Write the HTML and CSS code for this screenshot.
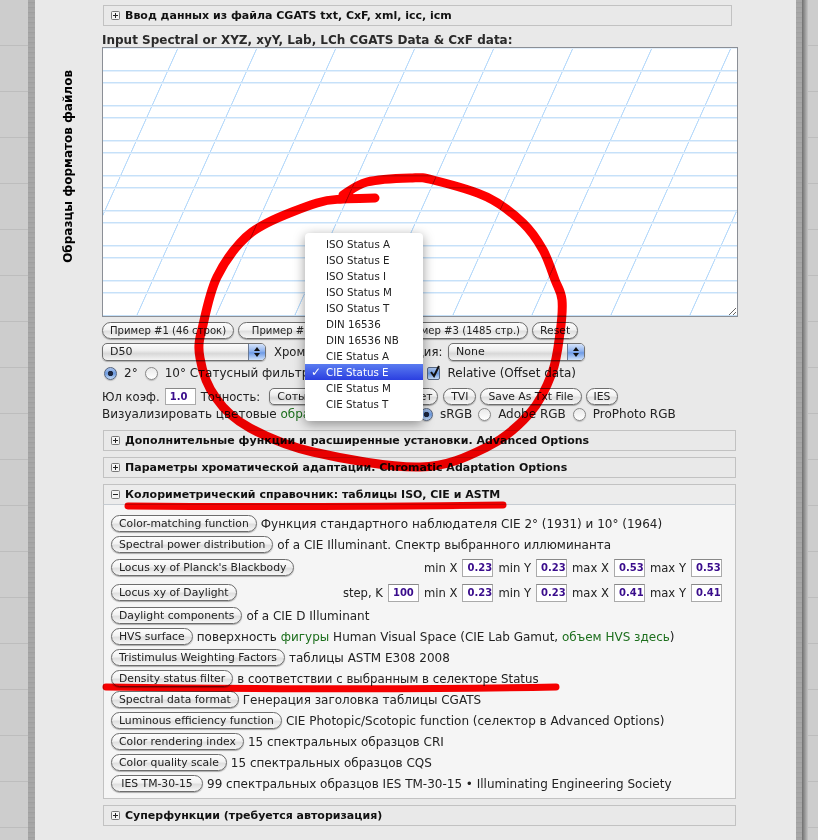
FILE: index.html
```html
<!DOCTYPE html>
<html lang="ru">
<head>
<meta charset="utf-8">
<title>Колориметрический справочник</title>
<link rel="stylesheet" href="styles.css">
</head>
<body>
<div class="page">
  <div class="gutter"></div>
  <div class="band"></div>
  <main class="panel">
    <aside class="side"><span class="side-title">Образцы форматов файлов</span></aside>
    <div class="content">
      <div class="head head-first"><svg class="tog" viewBox="0 0 9 9"><rect x=".5" y=".5" width="8" height="8" rx="1"/><path d="M2 4.5h5M4.5 2v5"/></svg>Ввод данных из файла CGATS txt, CxF, xml, icc, icm</div>
      <div class="input-label">Input Spectral or XYZ, xyY, Lab, LCh CGATS Data &amp; CxF data:</div>
      <textarea class="data" spellcheck="false"></textarea>

      <div class="row row-samples">
        <button class="pill pill-ru">Пример #1 (46 строк)</button>
        <button class="pill pill-ru pill-two">Пример #2 (217 строк)</button>
        <button class="pill pill-ru">Пример #3 (1485 стр.)</button>
        <button class="pill">Reset</button>
      </div>
      <div class="row row-selects">
        <div class="sel sel-illum">D50<span class="arrows"><svg viewBox="0 0 8 12"><path d="M4 1l3 4H1zM4 11L1 7h6z"/></svg></span></div>
        <span class="lbl-chrom">Хроматическая адаптация:</span>
        <div class="sel sel-chrom">None<span class="arrows"><svg viewBox="0 0 8 12"><path d="M4 1l3 4H1zM4 11L1 7h6z"/></svg></span></div>
      </div>
      <div class="row row-observer">
        <span class="radio on"></span><span class="t-deg2">2°</span>
        <span class="radio"></span><span class="t-status">10° Статусный фильтр</span>
        <div class="sel sel-status">CIE Status E<span class="arrows"><svg viewBox="0 0 8 12"><path d="M4 1l3 4H1zM4 11L1 7h6z"/></svg></span></div>
        <span class="check"><svg viewBox="0 0 14 14"><path d="M3 7l3 4 5-10"/></svg></span><span>Relative (Offset data)</span>
      </div>
      <div class="row row-tools">
        <span>Юл коэф.</span><input class="num num-yule" value="1.0"><span class="t-prec">Точность:</span>
        <div class="sel-plain">Сотые</div>
        <button class="pill pill-cet">Цвет</button>
        <button class="pill">TVI</button>
        <button class="pill">Save As Txt File</button>
        <button class="pill">IES</button>
      </div>
      <div class="row row-vis">
        <span class="vis-label">Визуализировать цветовые <span class="green">образцы</span> в стандарте:</span>
        <span class="radio on r-srgb"></span><span>sRGB</span>
        <span class="radio r-adobe"></span><span>Adobe RGB</span>
        <span class="radio r-pro"></span><span>ProPhoto RGB</span>
      </div>

      <div class="head"><svg class="tog" viewBox="0 0 9 9"><rect x=".5" y=".5" width="8" height="8" rx="1"/><path d="M2 4.5h5M4.5 2v5"/></svg>Дополнительные функции и расширенные установки. Advanced Options</div>
      <div class="head head-next"><svg class="tog" viewBox="0 0 9 9"><rect x=".5" y=".5" width="8" height="8" rx="1"/><path d="M2 4.5h5M4.5 2v5"/></svg>Параметры хроматической адаптации. Chromatic Adaptation Options</div>

      <section class="book">
        <div class="head head-open"><svg class="tog" viewBox="0 0 9 9"><rect x=".5" y=".5" width="8" height="8" rx="1"/><path d="M2 4.5h5"/></svg>Колориметрический справочник: таблицы ISO, CIE и ASTM</div>
        <div class="book-body">
          <div class="item"><button class="pill">Color-matching function</button><span>Функция стандартного наблюдателя CIE 2° (1931) и 10° (1964)</span></div>
          <div class="item"><button class="pill">Spectral power distribution</button><span>of a CIE Illuminant. Спектр выбранного иллюминанта</span></div>
          <div class="item item-tall"><button class="pill">Locus xy of Planck's Blackbody</button>
            <div class="ranges"><span>min X</span><input class="num" value="0.23"><span>min Y</span><input class="num" value="0.23"><span>max X</span><input class="num" value="0.53"><span>max Y</span><input class="num" value="0.53"></div></div>
          <div class="item item-tall"><button class="pill">Locus xy of Daylight</button>
            <div class="ranges"><span>step, K</span><input class="num" value="100"><span>min X</span><input class="num" value="0.23"><span>min Y</span><input class="num" value="0.23"><span>max X</span><input class="num" value="0.41"><span>max Y</span><input class="num" value="0.41"></div></div>
          <div class="item"><button class="pill">Daylight components</button><span>of a CIE D Illuminant</span></div>
          <div class="item"><button class="pill">HVS surface</button><span>поверхность <span class="green">фигуры</span> Human Visual Space (CIE Lab Gamut, <span class="green">объем HVS здесь</span>)</span></div>
          <div class="item"><button class="pill">Tristimulus Weighting Factors</button><span>таблицы ASTM E308 2008</span></div>
          <div class="item"><button class="pill">Density status filter</button><span class="t-density">в соответствии с выбранным в селекторе Status</span></div>
          <div class="item"><button class="pill">Spectral data format</button><span>Генерация заголовка таблицы CGATS</span></div>
          <div class="item"><button class="pill">Luminous efficiency function</button><span>CIE Photopic/Scotopic function (селектор в Advanced Options)</span></div>
          <div class="item"><button class="pill">Color rendering index</button><span>15 спектральных образцов CRI</span></div>
          <div class="item"><button class="pill">Color quality scale</button><span>15 спектральных образцов CQS</span></div>
          <div class="item"><button class="pill pill-ies">IES TM-30-15</button><span>99 спектральных образцов IES TM-30-15 • Illuminating Engineering Society</span></div>
        </div>
      </section>
      <div class="head head-last"><svg class="tog" viewBox="0 0 9 9"><rect x=".5" y=".5" width="8" height="8" rx="1"/><path d="M2 4.5h5M4.5 2v5"/></svg>Суперфункции (требуется авторизация)</div>
    </div>
  </main>
  <div class="band band-r"></div>
  <div class="shade"></div>
  <div class="gutter gutter-r"></div>
</div>

<ul class="menu">
  <li>ISO Status A</li><li>ISO Status E</li><li>ISO Status I</li><li>ISO Status M</li><li>ISO Status T</li>
  <li>DIN 16536</li><li>DIN 16536 NB</li><li>CIE Status A</li>
  <li class="cur"><span class="tick">✓</span>CIE Status E</li>
  <li>CIE Status M</li><li>CIE Status T</li>
</ul>

<svg class="ink" viewBox="0 0 818 840" aria-hidden="true">
  <path d="M375 198C370 198.2 352.7 198.2 343 199C333.3 199.8 329.7 199 317 203C304.3 207 279.8 216.3 267 223C254.2 229.7 248.3 234 240 243C231.7 252 223.7 263.3 217 277C210.3 290.7 206 311.5 203 325C199.5 338.5 197.5 345.8 200 358C202 370 207 386 216 398C224 409.7 233.3 419 250 428C266.7 437 284.7 445.5 313 452C341.3 458.5 391 467.8 420 467C449 466.2 468.7 456 487 447C505.3 438 519.2 425.3 530 413C540.8 400.7 547 386.3 552 373C557 359.7 558.3 345.2 560 333C561.7 320.8 562.8 308.8 562 300C561.2 291.2 558.2 288.3 555 280C551.8 271.7 548.3 259.5 543 250C537.7 240.5 532.3 231.8 523 223C513.7 214.2 502 204.2 487 197C472 189.8 445.8 183.2 433 180C420.2 176.8 421 177.7 410 178C399 178.3 378.2 179.2 367 182C355.8 184.8 347 193 343 195"/>
  <path class="thin" d="M128 506C250 507 380 506.5 503 505"/>
  <path class="thin" d="M106 687C260 689 410 690 556 687"/>
</svg>
</body>
</html>
```
FILE: styles.css
```css
* { box-sizing: border-box; }
html, body { margin: 0; height: 840px; overflow: hidden; }
body {
  position: relative;
  font: 12px/14px "DejaVu Sans", sans-serif;
  color: #222;
  background: #e9e9e9;
}
.page { display: flex; height: 840px; }
.gutter {
  width: 28px;
  background: repeating-linear-gradient(180deg, #cdcdcd 0 45px, #bdbdbd 45px 46px);
}
.gutter-r { width: 10px; }
.band {
  width: 7px;
  background: repeating-linear-gradient(180deg, #a8a8a8 0 2px, #9f9f9f 2px 3px, #a5a5a5 3px 5px);
}
.band-r { width: 6px; }
.shade { width: 6px; background: linear-gradient(90deg, #6f6f6f, #8c8c8c 35%, #c4c4c4); }
.panel { flex: none; width: 761px; display: flex; background: #e9e9e9; }
.side { flex: none; width: 67px; padding: 70px 0 0 26px; }
.side-title {
  display: block;
  writing-mode: vertical-rl;
  transform: rotate(180deg);
  font-weight: 700;
  font-size: 12px;
  color: #000;
}
.content { flex: none; width: 640px; padding-top: 5px; }

.head {
  display: flex;
  align-items: center;
  width: 633px;
  height: 21px;
  margin: 9px 0 0 1px;
  padding-left: 7px;
  border: 1px solid #c2c2c2;
  font-weight: 700;
  font-size: 11px;
  color: #111;
}
.head-first { width: 629px; margin-top: 0; }
.head-next, .head-last { margin-top: 6px; }
.tog { width: 9px; height: 9px; margin-right: 5px; flex: none; }
.tog rect { fill: #f4f4f4; stroke: #777; }
.tog path { stroke: #222; fill: none; }
.input-label { margin-top: 7px; height: 14px; font-weight: 700; font-size: 12px; line-height: 14px; color: #2a2a2a; white-space: nowrap; }
.data {
  display: block;
  width: 636px;
  height: 270px;
  margin: 0;
  padding: 2px;
  border: 1px solid #8b8f96;
  outline: none;
  background-color: #fff;
  background-image:
    repeating-linear-gradient(180deg, #e4f0fc 0, #e4f0fc .7px, transparent 1px, transparent 22px, #c6e1f9 22.1px, #c6e1f9 22.9px, #e4f0fc 23.1px, #e4f0fc 23.9px, transparent 24px, transparent 34px, #c6e1f9 34.1px, #c6e1f9 34.9px, #e4f0fc 35px),
    repeating-linear-gradient(114.2deg, transparent 0, transparent 67.6px, #b9dbfb 68.1px, #b9dbfb 68.7px, transparent 69.2px, transparent 72.05px);
}

.row { display: flex; align-items: center; white-space: nowrap; }
.row-samples { height: 17px; margin-top: 5px; gap: 4px; }
.row-selects { height: 18px; margin-top: 4px; }
.row-observer { height: 16px; margin-top: 4px; }
.row-tools { height: 17px; margin-top: 7px; font-size: 11.6px; }
.row-vis { height: 14px; margin-top: 2px; }
.row-vis + .head { margin-top: 9px; }
.vis-label { width: 318px; }

.pill {
  flex: none;
  height: 17px;
  margin: 0;
  padding: 0 7px;
  border: 1px solid #6d6d6d;
  border-radius: 9px;
  background: linear-gradient(180deg, #fdfdfd 0, #f2f2f2 45%, #dfdfdf 55%, #f6f6f6 100%);
  box-shadow: 0 1px 1px rgba(0,0,0,.3);
  font: 10.8px/14px "DejaVu Sans", sans-serif;
  color: #222;
  white-space: nowrap;
}
.pill-ru { font-size: 10.1px; }
.pill-two { width: 150px; }
.pill-ies { width: 92px; }
.pill-cet { margin-left: 5px; width: 39px; padding: 0 3px; margin-right: 5px; }
.row-tools .pill + .pill { margin-right: 4px; }
.t-density { font-size: 11.8px; }

.sel, .sel-plain {
  position: relative;
  flex: none;
  height: 18px;
  padding-left: 7px;
  border: 1px solid #707070;
  border-radius: 5px;
  background: linear-gradient(180deg, #fcfcfc, #eeeeee 40%, #d8d8d8 60%, #f4f4f4);
  box-shadow: 0 1px 1px rgba(0,0,0,.25);
  font-size: 11px;
  line-height: 16px;
}
.sel-illum { width: 164px; }
.sel-chrom { width: 137px; margin-left: 5px; }
.sel-status { width: 104px; margin-left: 6px; height: 16px; line-height: 14px; }
.sel-plain { width: 125px; height: 17px; margin-left: 9px; line-height: 15px; }
.lbl-chrom { margin-left: 8px; width: 169px; white-space: nowrap; font-size: 11.65px; }
.arrows {
  position: absolute;
  top: 0; right: 0; bottom: 0;
  width: 17px;
  display: flex;
  align-items: center;
  justify-content: center;
  border-left: 1px solid #6a7a94;
  border-radius: 0 4px 4px 0;
  background: linear-gradient(180deg, #d5e3fa, #8fb3ee 45%, #6f9be6 55%, #cfe2fb);
}
.arrows svg { width: 8px; height: 12px; fill: #111; }

.radio {
  flex: none;
  width: 13px;
  height: 13px;
  border: 1px solid #888;
  border-radius: 50%;
  background: linear-gradient(180deg, #e9e9e9, #fff);
  box-shadow: 0 1px 1px rgba(0,0,0,.2);
}
.radio.on {
  border-color: #56657f;
  background: radial-gradient(circle, #1c2740 0 2.4px, transparent 3px), linear-gradient(180deg, #a9c3ec, #6e9be0 50%, #c5dcf8);
}
.row-observer .radio:first-child { margin-left: 2px; }
.t-deg2 { margin: 0 7px 0 7px; }
.t-status { margin-left: 7px; }
.check {
  flex: none;
  width: 13px; height: 13px;
  margin: 0 7px 0 8px;
  border: 1px solid #56657f;
  border-radius: 2px;
  background: linear-gradient(180deg, #a9c3ec, #6e9be0 50%, #c5dcf8);
}
.check svg { display: block; width: 14px; height: 14px; margin: -3px 0 0 0; overflow: visible; fill: none; stroke: #111; stroke-width: 2; }
.num {
  flex: none;
  width: 31px;
  height: 18px;
  margin: 0;
  padding: 0 0 0 4px;
  border: 1px solid #aaa;
  border-top-color: #888;
  background: #fff;
  font: 700 10px/16px "DejaVu Sans", sans-serif;
  color: #3a0d8c;
}
.num-yule { height: 17px; margin-left: 5px; }
.t-prec { margin-left: 5px; }
.green { color: #1d6f1d; }
.r-srgb { margin: 0 7px 0 0; }
.r-adobe { margin: 0 7px 0 6px; }
.r-pro { margin: 0 7px 0 7px; }

.book { width: 633px; margin: 6px 0 0 1px; border: 1px solid #c2c2c2; border-top: 0; background: #f5f5f5; }
.head-open { width: auto; margin: 0 -1px; border-color: #c2c2c2; background: #ececec; height: 21px; border-bottom-color: #c6ccd2; }
.book-body { padding: 8px 7px 4px; }
.item { display: flex; align-items: center; gap: 4px; height: 21px; white-space: nowrap; }
.item-tall { height: 25px; }
.ranges { display: flex; align-items: center; gap: 5px; margin-left: auto; padding-right: 6px; font-size: 11.6px; }

.menu {
  position: absolute;
  left: 305px; top: 233px;
  width: 118px; height: 188px;
  margin: 0;
  padding: 3px 0 0;
  list-style: none;
  background: #fff;
  border-radius: 4px;
  box-shadow: 0 3px 12px rgba(0,0,0,.4);
  font-size: 10.3px;
  line-height: 16px;
  color: #222;
}
.menu li { position: relative; height: 16px; padding-left: 21px; white-space: nowrap; }
.menu .cur { background: linear-gradient(180deg, #5a7cf0, #2b3fe0); color: #fff; }
.tick { position: absolute; left: 6px; top: 0; font-weight: 700; font-size: 12px; }

.ink {
  position: absolute;
  left: 0; top: 0;
  width: 818px; height: 840px;
  fill: none;
  stroke: #f00;
  stroke-width: 9;
  stroke-linecap: round;
  stroke-linejoin: round;
  mix-blend-mode: multiply;
  pointer-events: none;
}
.ink .thin { stroke-width: 7; }
```
